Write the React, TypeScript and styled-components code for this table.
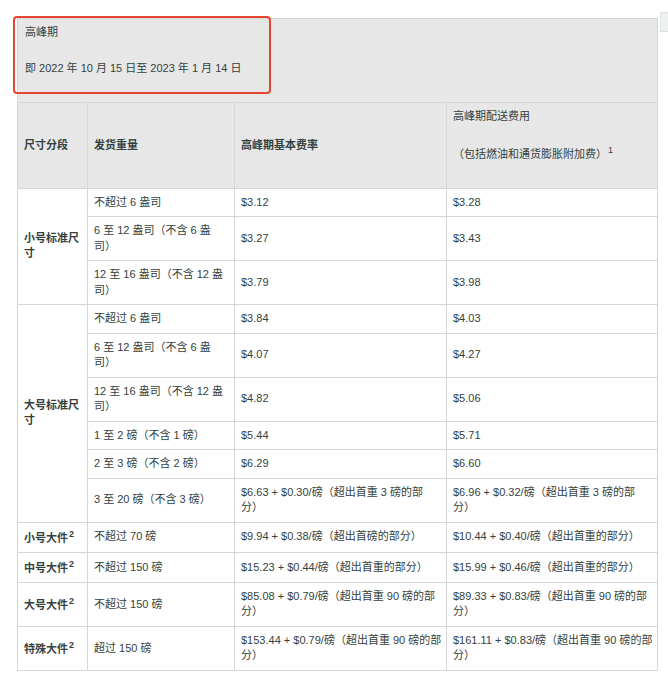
import React from 'react';
import styled, { createGlobalStyle } from 'styled-components';

const GlobalStyle = createGlobalStyle`
  html, body {
    margin: 0;
    padding: 0;
    background: #ffffff;
  }
  body {
    font-family: "Liberation Sans", "Noto Sans CJK SC", sans-serif;
    color: #33423e;
    text-spacing-trim: space-all;
    text-autospace: no-autospace;
  }
`;

const Page = styled.div`
  position: relative;
  padding: 18px 11px 17px 17px;
`;

const Table = styled.table`
  width: 640px;
  border-collapse: collapse;
  table-layout: fixed;
  font-size: 11px;
  line-height: 15.5px;
`;

const HeadCell = styled.th<{ $light?: boolean }>`
  background: #e7e7e7;
  border: 1px solid #d6d6d6;
  padding: 6px 3px 6px 6px;
  text-align: left;
  vertical-align: middle;
  font-weight: ${(p) => (p.$light ? 'normal' : 'bold')};
`;

const PeriodCell = styled.th`
  background: #e7e7e7;
  border: 1px solid #d6d6d6;
  padding: 6px 7px;
  text-align: left;
  font-weight: normal;
`;

const Para = styled.p`
  margin: 0 0 20px;
`;

const Cell = styled.td<{ $bold?: boolean }>`
  border: 1px solid #d6d6d6;
  padding: 6px 3px 6px 6px;
  vertical-align: middle;
  font-weight: ${(p) => (p.$bold ? 'bold' : 'normal')};
`;

const Sup = styled.sup`
  font-size: 9px;
  line-height: normal;
  vertical-align: super;
  margin-left: 1px;
`;

const Highlight = styled.div`
  position: absolute;
  left: 13px;
  top: 16px;
  width: 254px;
  height: 74px;
  border: 2px solid #e6452f;
  border-radius: 4px;
  pointer-events: none;
`;

const EdgeTab = styled.div`
  position: absolute;
  right: 0;
  top: 12px;
  width: 7px;
  height: 18px;
  background: #eef1f1;
  border: 1px solid #dfe3e3;
  border-right: none;
`;

type Row = {
  group?: string;
  span?: number;
  sup?: boolean;
  weight: string;
  base: string;
  peak: string;
};

const rows: Row[] = [
  { group: '小号标准尺寸', span: 3, weight: '不超过 6 盎司', base: '$3.12', peak: '$3.28' },
  { weight: '6 至 12 盎司（不含 6 盎司）', base: '$3.27', peak: '$3.43' },
  { weight: '12 至 16 盎司（不含 12 盎司）', base: '$3.79', peak: '$3.98' },
  { group: '大号标准尺寸', span: 6, weight: '不超过 6 盎司', base: '$3.84', peak: '$4.03' },
  { weight: '6 至 12 盎司（不含 6 盎司）', base: '$4.07', peak: '$4.27' },
  { weight: '12 至 16 盎司（不含 12 盎司）', base: '$4.82', peak: '$5.06' },
  { weight: '1 至 2 磅（不含 1 磅）', base: '$5.44', peak: '$5.71' },
  { weight: '2 至 3 磅（不含 2 磅）', base: '$6.29', peak: '$6.60' },
  {
    weight: '3 至 20 磅（不含 3 磅）',
    base: '$6.63 + $0.30/磅（超出首重 3 磅的部分）',
    peak: '$6.96 + $0.32/磅（超出首重 3 磅的部分）',
  },
  {
    group: '小号大件',
    span: 1,
    sup: true,
    weight: '不超过 70 磅',
    base: '$9.94 + $0.38/磅（超出首磅的部分）',
    peak: '$10.44 + $0.40/磅（超出首重的部分）',
  },
  {
    group: '中号大件',
    span: 1,
    sup: true,
    weight: '不超过 150 磅',
    base: '$15.23 + $0.44/磅（超出首重的部分）',
    peak: '$15.99 + $0.46/磅（超出首重的部分）',
  },
  {
    group: '大号大件',
    span: 1,
    sup: true,
    weight: '不超过 150 磅',
    base: '$85.08 + $0.79/磅（超出首重 90 磅的部分）',
    peak: '$89.33 + $0.83/磅（超出首重 90 磅的部分）',
  },
  {
    group: '特殊大件',
    span: 1,
    sup: true,
    weight: '超过 150 磅',
    base: '$153.44 + $0.79/磅（超出首重 90 磅的部分）',
    peak: '$161.11 + $0.83/磅（超出首重 90 磅的部分）',
  },
];

export default function App() {
  return (
    <Page>
      <GlobalStyle />
      <Table>
        <colgroup>
          <col style={{ width: 70 }} />
          <col style={{ width: 147 }} />
          <col style={{ width: 212 }} />
          <col style={{ width: 211 }} />
        </colgroup>
        <thead>
          <tr>
            <PeriodCell colSpan={4}>
              <Para>高峰期</Para>
              <Para>即 2022 年 10 月 15 日至 2023 年 1 月 14 日</Para>
            </PeriodCell>
          </tr>
          <tr>
            <HeadCell>尺寸分段</HeadCell>
            <HeadCell>发货重量</HeadCell>
            <HeadCell>高峰期基本费率</HeadCell>
            <HeadCell $light>
              <Para>高峰期配送费用</Para>
              <Para>
                （包括燃油和通货膨胀附加费）<Sup>1</Sup>
              </Para>
            </HeadCell>
          </tr>
        </thead>
        <tbody>
          {rows.map((r, i) => (
            <tr key={i}>
              {r.group && (
                <Cell $bold rowSpan={r.span}>
                  {r.group}
                  {r.sup && <Sup>2</Sup>}
                </Cell>
              )}
              <Cell>{r.weight}</Cell>
              <Cell>{r.base}</Cell>
              <Cell>{r.peak}</Cell>
            </tr>
          ))}
        </tbody>
      </Table>
      <Highlight />
      <EdgeTab />
    </Page>
  );
}
